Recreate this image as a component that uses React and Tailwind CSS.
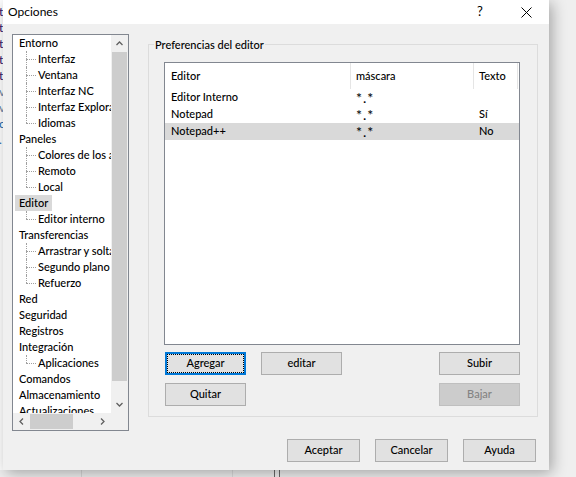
import React from 'react';

const tree = [
  { label: 'Entorno', children: ['Interfaz', 'Ventana', 'Interfaz NC', 'Interfaz Explorador', 'Idiomas'] },
  { label: 'Paneles', children: ['Colores de los archivos', 'Remoto', 'Local'] },
  { label: 'Editor', selected: true, children: ['Editor interno'] },
  { label: 'Transferencias', children: ['Arrastrar y soltar', 'Segundo plano', 'Refuerzo'] },
  { label: 'Red' },
  { label: 'Seguridad' },
  { label: 'Registros' },
  { label: 'Integración', children: ['Aplicaciones'] },
  { label: 'Comandos' },
  { label: 'Almacenamiento' },
  { label: 'Actualizaciones' },
];

const editors = [
  { name: 'Editor Interno', mask: '*.*', text: '' },
  { name: 'Notepad', mask: '*.*', text: 'Sí' },
  { name: 'Notepad++', mask: '*.*', text: 'No', selected: true },
];

// bits of the window behind the dialog
const behind = [
  ['t', 'text-[#3a1a6a]'],
  ['t', 'text-[#3a1a6a]'],
  ['t', 'text-[#3a1a6a]'],
  ['t', 'text-[#3a1a6a]'],
  ['t', 'text-[#3a1a6a]'],
  ['v', 'text-[#7088a8]'],
  ['v', 'text-[#7088a8]'],
  ['c', 'text-[#3070b0]'],
  ['.', 'text-[#3070b0]'],
];

const Chevron = ({ dir }) => {
  const pts = {
    up: '0.5,4 3.5,1 6.5,4',
    down: '0.5,1 3.5,4 6.5,1',
    left: '4,0.5 1,3.5 4,6.5',
    right: '1,0.5 4,3.5 1,6.5',
  }[dir];
  const vertical = dir === 'up' || dir === 'down';
  return (
    <svg width={vertical ? 7 : 5} height={vertical ? 5 : 7} viewBox={vertical ? '0 0 7 5' : '0 0 5 7'}>
      <polyline points={pts} fill="none" stroke="#606060" strokeWidth="1.3" />
    </svg>
  );
};

const Connector = ({ last }) => (
  <div className="relative w-[12px] h-full shrink-0">
    <div className={`absolute left-0 top-0 border-l border-dotted border-[#a0a0a0] ${last ? 'h-[8px]' : 'h-full'}`} />
    <div className="absolute left-0 top-[8px] w-[10px] border-t border-dotted border-[#a0a0a0]" />
  </div>
);

const TreeView = () => (
  <div className="w-[117px] h-[397px] shrink-0 border border-[#828790] bg-white flex flex-col">
    <div className="flex flex-1 min-h-0">
      <div className="flex-1 overflow-hidden">
        {tree.map((node) => (
          <div key={node.label}>
            <div className="h-4 flex items-center pl-[2px] whitespace-nowrap">
              <span className={`px-[4px] h-4 leading-4 ${node.selected ? 'bg-[#d9d9d9]' : ''}`}>{node.label}</span>
            </div>
            {node.children?.map((child, i) => (
              <div key={child} className="h-4 flex whitespace-nowrap">
                <div className="w-[13px] shrink-0" />
                <Connector last={i === node.children.length - 1} />
                <span className="leading-4">{child}</span>
              </div>
            ))}
          </div>
        ))}
      </div>
      <div className="w-[17px] bg-[#f0f0f0] flex flex-col">
        <div className="h-[17px] flex items-center justify-center"><Chevron dir="up" /></div>
        <div className="flex-1 px-[1px]">
          <div className="h-[329px] bg-[#cdcdcd]" />
        </div>
        <div className="h-[17px] flex items-center justify-center"><Chevron dir="down" /></div>
      </div>
    </div>
    <div className="h-[17px] flex bg-[#f0f0f0]">
      <div className="w-[17px] flex items-center justify-center"><Chevron dir="left" /></div>
      <div className="flex-1 py-[1px]">
        <div className="w-[43px] h-full bg-[#cdcdcd]" />
      </div>
      <div className="w-[17px] flex items-center justify-center"><Chevron dir="right" /></div>
      <div className="w-[17px] bg-[#f0f0f0]" />
    </div>
  </div>
);

const Button = ({ children, width = 'w-[81px]', disabled, focused }) => {
  if (focused) {
    return (
      <div className={`${width} h-[23px] shrink-0 border-2 border-[#0078d7] bg-[#e1e1e1] flex`}>
        <div className="flex-1 border border-dotted border-black flex items-center justify-center">{children}</div>
      </div>
    );
  }
  return (
    <div
      className={`${width} h-[23px] shrink-0 border flex items-center justify-center ${
        disabled ? 'border-[#bfbfbf] bg-[#cccccc] text-[#838383]' : 'border-[#adadad] bg-[#e1e1e1]'
      }`}
    >
      {children}
    </div>
  );
};

const EditorList = () => (
  <div className="w-[356px] h-[283px] border border-[#828790] bg-white">
    <div className="h-[26px] flex">
      <div className="w-[186px] pl-[6px] border-r border-[#e5e5e5] flex items-center">Editor</div>
      <div className="w-[123px] pl-[5px] border-r border-[#e5e5e5] flex items-center">máscara</div>
      <div className="w-[44px] pl-[5px] border-r border-[#e5e5e5] flex items-center">Texto</div>
    </div>
    {editors.map((row) => (
      <div key={row.name} className={`h-[17px] flex items-center ${row.selected ? 'bg-[#d9d9d9]' : ''}`}>
        <div className="w-[186px] pl-[6px]">{row.name}</div>
        <div className="w-[123px] pl-[5px] h-full flex items-center text-[14px] leading-none tracking-[1px]">{row.mask}</div>
        <div className="w-[44px] pl-[5px]">{row.text}</div>
      </div>
    ))}
  </div>
);

const Dialog = () => (
  <div className="relative z-10 w-[546px] h-[470px] shrink-0 bg-[#f0f0f0] flex flex-col shadow-[3px_3px_14px_rgba(0,0,0,0.32)]">
    <div className="h-[24px] bg-white flex items-center text-[12px] font-normal">
      <span className="pl-[5px] flex-1">Opciones</span>
      <div className="w-[46px] h-full flex items-center justify-center text-[13px]">?</div>
      <div className="w-[46px] h-full flex items-center justify-center">
        <svg width="11" height="11" viewBox="0 0 11 11">
          <path d="M0.5 0.5 L10.5 10.5 M10.5 0.5 L0.5 10.5" stroke="#000" strokeWidth="1" />
        </svg>
      </div>
    </div>

    <div className="flex items-start pl-[9px] pt-[10px]">
      <TreeView />
      <div className="relative ml-[19px] mt-[10px] w-[390px] h-[373px] border border-[#dcdcdc] pt-[17px] pl-[15px]">
        <span className="absolute -top-[8px] left-[5px] px-[1px] leading-4 bg-[#f0f0f0]">Preferencias del editor</span>
        <EditorList />
        <div className="flex mt-[7px] pl-[1px]">
          <Button focused>Agregar</Button>
          <div className="ml-[15px]"><Button>editar</Button></div>
          <div className="ml-[97px]"><Button>Subir</Button></div>
        </div>
        <div className="flex mt-[8px] pl-[1px]">
          <Button>Quitar</Button>
          <div className="ml-[193px]"><Button disabled>Bajar</Button></div>
        </div>
      </div>
    </div>

    <div className="flex justify-end gap-[15px] pr-[13px] mt-[8px]">
      <Button width="w-[73px]">Aceptar</Button>
      <Button width="w-[73px]">Cancelar</Button>
      <Button width="w-[73px]">Ayuda</Button>
    </div>
  </div>
);

export default function App() {
  return (
    <div className="w-[576px] h-[477px] overflow-hidden bg-[#efefef] text-black text-[11px] font-medium font-['Lato',sans-serif] flex flex-col">
      <div className="flex h-[470px]">
        <div className="w-[3px] shrink-0 overflow-hidden pt-[4px] bg-white text-[12px]">
          {behind.map(([ch, color], i) => (
            <div key={i} className={`h-4 leading-4 -ml-[1px] ${color}`}>{ch}</div>
          ))}
        </div>
        <Dialog />
        <div className="flex-1" />
      </div>
      <div className="flex-1 flex">
        <div className="w-[81px]" />
        <div className="w-px bg-[#d8d8d8]" />
        <div className="w-[150px]" />
        <div className="w-px bg-[#dcdcdc]" />
        <div className="w-[41px]" />
        <div className="w-px bg-[#6a6a6a]" />
        <div className="w-[4px]" />
        <div className="w-px bg-[#6a6a6a]" />
      </div>
    </div>
  );
}
